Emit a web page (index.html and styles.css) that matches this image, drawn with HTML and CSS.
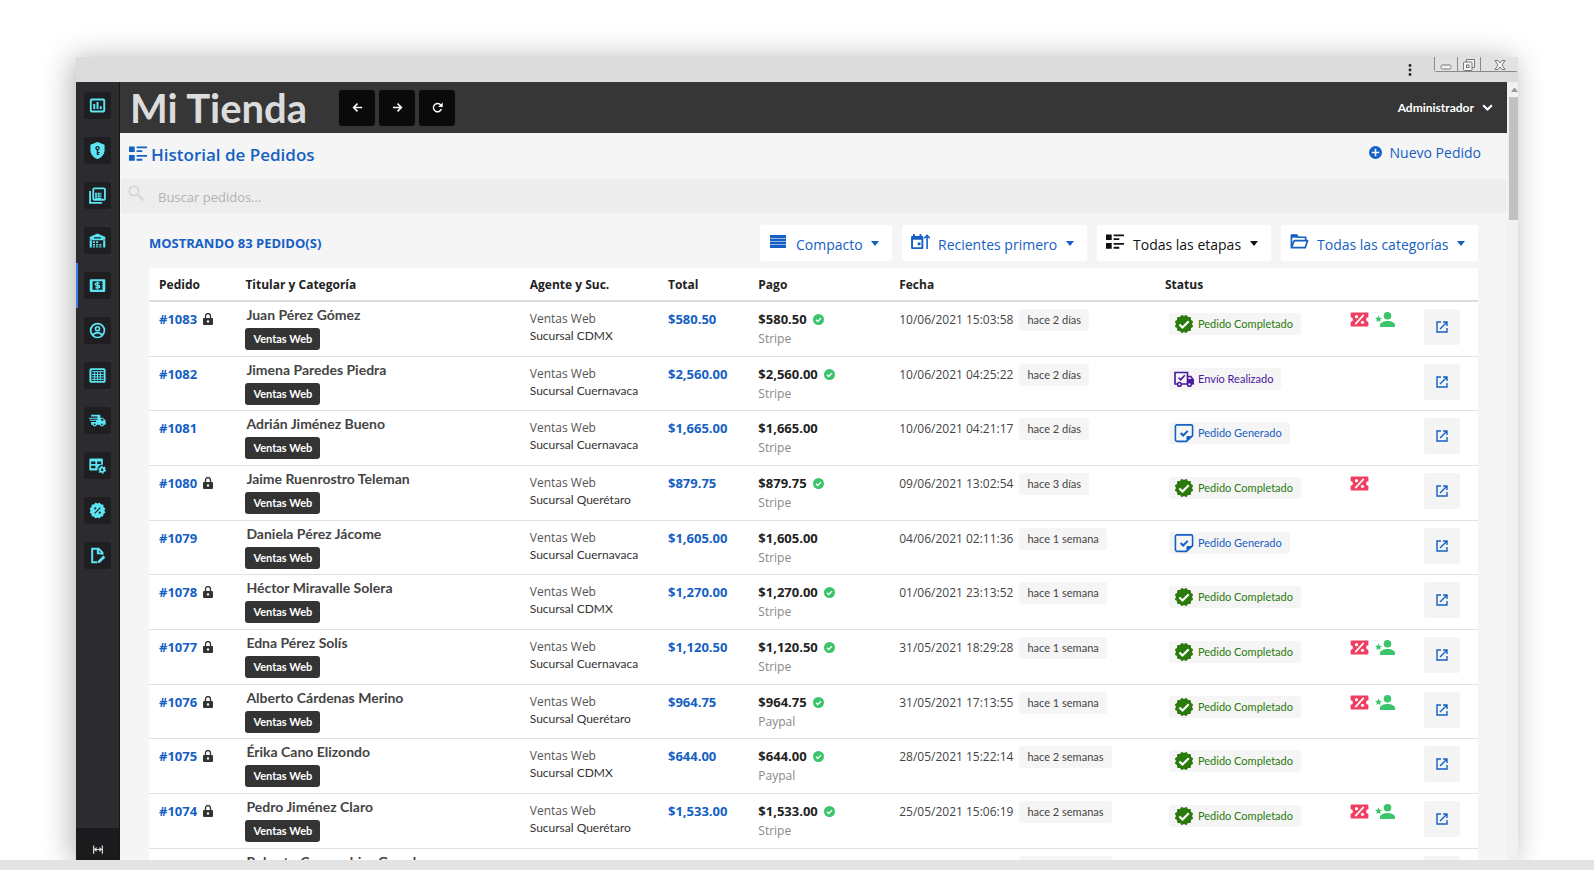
FILE: index.html
```html
<!DOCTYPE html>
<html lang="es">
<head>
    <meta charset="UTF-8">
    <meta name="viewport" content="width=device-width, initial-scale=1.0">
    <title>Mi Tienda - Historial de Pedidos</title>
    <link rel="stylesheet" href="styles.css">
</head>
<body>
    <!-- icon sprite -->
    <svg class="sprite" width="0" height="0" aria-hidden="true">
        <symbol id="i-chart" viewBox="0 0 24 24">
            <rect x="2.5" y="3.5" width="19" height="17" rx="1.5" fill="none" stroke="currentColor" stroke-width="2.6"/>
            <path d="M6 10h2.800v7H6zM10.600 7h2.800v10h-2.800zM15.200 13H18v4h-2.800z"/>
        </symbol>
        <symbol id="i-shield" viewBox="0 0 24 24">
            <path fill-rule="evenodd" d="M12 0 2 4v7.500C2 17 6.200 22 12 24c5.800-2 10-7 10-12.500V4zM12 5.500a3.200 3.200 0 0 1 1 6.200V14h2v1.500h-2V17h1.500v1.500H11v-6.800a3.200 3.200 0 0 1 1-6.200zm0 1.900a1.300 1.300 0 1 0 0 2.600 1.300 1.300 0 0 0 0-2.600z"/>
        </symbol>
        <symbol id="i-tables" viewBox="0 0 24 24">
            <path d="M1.500 5.500v17h17" fill="none" stroke="currentColor" stroke-width="2.600"/>
            <rect x="6" y="2" width="16.500" height="16" rx="1.500" fill="none" stroke="currentColor" stroke-width="2.600"/>
            <path d="M8.500 8h3v3h-3zM12.300 8h3v3h-3zM8.500 11.800h3v3h-3zM12.300 11.800h3v3h-3zM16 11.800h1.500v3H16zM8.500 15.500h9V18h-9zM16 8h1.500v3H16z"/>
        </symbol>
        <symbol id="i-store" viewBox="0 0 24 24">
            <path d="M12 2 1 7v4.500h22V7zM7 7.500h10V9H7zM1 11h3v11H1zM20 11h3v11h-3zM5.500 13h3v2.500h-3zM10 13h3v2.500h-3zM5.500 17h3v2h-3zM10 17h3v2h-3zM14.500 17h3v2h-3zM5.500 20.200h3V22h-3zM10 20.200h3V22h-3zM14.500 20.200h3V22h-3z"/>
        </symbol>
        <symbol id="i-cash" viewBox="0 0 24 24">
            <path fill-rule="evenodd" d="M2.500 3h19A1.500 1.500 0 0 1 23 4.500v15a1.500 1.500 0 0 1-1.500 1.500h-19A1.500 1.500 0 0 1 1 19.500v-15A1.500 1.500 0 0 1 2.500 3zM5 6v12h14V6z"/>
            <path d="M15 8.700h-4.500a1.600 1.600 0 0 0 0 3.200h3a1.600 1.600 0 0 1 0 3.200H9M12 6.500v11" fill="none" stroke="currentColor" stroke-width="2"/>
        </symbol>
        <symbol id="i-user" viewBox="0 0 24 24">
            <path d="M12 1a11 11 0 1 0 0 22 11 11 0 0 0 0-22zM6.800 18.600c.6-1.200 3.200-2.100 5.200-2.100s4.600.9 5.200 2.100a8.200 8.200 0 0 1-10.400 0zm12-2C17.100 14.500 13.500 14 12 14s-5.100.5-6.800 2.600A8.400 8.400 0 1 1 20.500 12c0 1.700-.6 3.300-1.700 4.600zM12 5.500a4 4 0 1 0 0 8 4 4 0 0 0 0-8zm0 2.300a1.700 1.700 0 1 1 0 3.400 1.700 1.700 0 0 1 0-3.400z"/>
        </symbol>
        <symbol id="i-grid" viewBox="0 0 24 24">
            <rect x="2" y="3" width="20" height="18" rx="1" fill="none" stroke="currentColor" stroke-width="2.800"/>
            <path d="M4 6.500h16M4 10.500h16M4 14h16M4 17.500h16M8 7v12M12 7v12M16 7v12" fill="none" stroke="currentColor" stroke-width="1.400"/>
        </symbol>
        <symbol id="i-truck" viewBox="0 0 24 24">
            <path d="M3 4h13v4h3.500L23.500 12v6h-2.200a3.200 3.200 0 0 1-6.200 0h-4a3.200 3.200 0 0 1-6.200 0H3v-4h7v-1.500H1V11h11V9.500H0V8h12V6.500H3zM17 9.700V12h4.300l-1.800-2.300z"/>
            <circle cx="8" cy="17.500" r="1.200" fill="#1f1f22"/><circle cx="18.200" cy="17.500" r="1.200" fill="#1f1f22"/>
        </symbol>
        <symbol id="i-tablecog" viewBox="0 0 24 24">
            <path fill-rule="evenodd" d="M2 2h16a1.500 1.500 0 0 1 1.500 1.500V11a6.500 6.500 0 0 0-7.500 8H2a1.500 1.500 0 0 1-1.500-1.500v-14A1.500 1.500 0 0 1 2 2zM3 6.500V10h6V6.500zm8.500 0V10H17V6.500zM3 12.500V16h6v-3.500z"/>
            <circle cx="18.500" cy="18" r="3" fill="none" stroke="currentColor" stroke-width="2.600"/>
            <circle cx="18.500" cy="18" r="4.700" fill="none" stroke="currentColor" stroke-width="1.800" stroke-dasharray="2.460"/>
        </symbol>
        <symbol id="i-sale" viewBox="0 0 24 24">
            <rect x="3.700" y="3.700" width="16.600" height="16.600" rx="1"/><rect x="3.700" y="3.700" width="16.600" height="16.600" rx="1" transform="rotate(30 12 12)"/><rect x="3.700" y="3.700" width="16.600" height="16.600" rx="1" transform="rotate(60 12 12)"/>
            <path d="m8 16 8-8" stroke="#1f1f22" stroke-width="1.800"/><circle cx="8.800" cy="9" r="1.500" fill="#1f1f22"/><circle cx="15.200" cy="15" r="1.500" fill="#1f1f22"/>
        </symbol>
        <symbol id="i-fileedit" viewBox="0 0 24 24">
            <path d="M12 21.500H4.500v-19h9l5.500 5.500v3M12.500 3v6H19" fill="none" stroke="currentColor" stroke-width="2.800"/>
            <path d="m12.500 22.500.3-3 7.500-7.500 2.700 2.700-7.500 7.500z"/>
        </symbol>
        <symbol id="i-expand" viewBox="0 0 24 24">
            <path d="M2.500 3v18M21.500 3v18M5 12h14M9 8l-4 4 4 4M15 8l4 4-4 4" fill="none" stroke="currentColor" stroke-width="2.600"/>
        </symbol>
        <symbol id="i-left" viewBox="0 0 24 24"><path d="M22 12H4M12 3.500 3.500 12l8.500 8.500" fill="none" stroke="currentColor" stroke-width="3.400"/></symbol>
        <symbol id="i-right" viewBox="0 0 24 24"><path d="M2 12h18M12 3.500l8.500 8.500-8.500 8.500" fill="none" stroke="currentColor" stroke-width="3.400"/></symbol>
        <symbol id="i-reload" viewBox="0 0 24 24"><path d="M20.500 15.500A9 9 0 1 1 18 5.500L21 8.500" fill="none" stroke="currentColor" stroke-width="3.200"/><path d="M23.500 1v10h-10z"/></symbol>
        <symbol id="i-chevron" viewBox="0 0 24 24"><path d="m2.500 7 9.500 9.500L21.500 7" fill="none" stroke="currentColor" stroke-width="4.500"/></symbol>
        <symbol id="i-list" viewBox="0 0 20 16"><path d="M0 0h6v6H0zM0 9h6v6H0zM8 0h11v2H8zM8 4h6v2H8zM8 9h11v2H8zM8 13h6v2H8z"/></symbol>
        <symbol id="i-search" viewBox="0 0 24 24"><circle cx="9" cy="9" r="7" fill="none" stroke="currentColor" stroke-width="2.600"/><path d="m14 14 9 9" stroke="currentColor" stroke-width="3.400"/></symbol>
        <symbol id="i-plus" viewBox="0 0 24 24"><path fill-rule="evenodd" d="M12 0a12 12 0 1 0 0 24 12 12 0 0 0 0-24zm1.500 5v5.500H19v3h-5.500V19h-3v-5.500H5v-3h5.500V5z"/></symbol>
        <symbol id="i-rows" viewBox="0 0 16 13"><path d="M0 0h16v13H0z" opacity=".45"/><path d="M0 0h16v3H0zM0 4h16v2H0zM0 7h16v2H0zM0 10h16v3H0z"/></symbol>
        <symbol id="i-calendar" viewBox="0 0 20 17">
            <path fill-rule="evenodd" d="M2 0h2v2h5V0h2v2h1a1 1 0 0 1 1 1v12a1 1 0 0 1-1 1H1a1 1 0 0 1-1-1V3a1 1 0 0 1 1-1h1zm0 6v8h9V6zM7 9h3v3H7z"/>
            <path d="M17 16V2M14 4.500l3-3 3 3" fill="none" stroke="currentColor" stroke-width="1.700"/>
        </symbol>
        <symbol id="i-folder" viewBox="0 0 20 16">
            <path d="M1.500 14V1h5.500l1.500 2h8v2.500M1.500 14 4.500 6.500h14L16 14z" fill="none" stroke="currentColor" stroke-width="1.800" stroke-linejoin="round"/><path d="M1 0h7v3.500H1z"/>
        </symbol>
        <symbol id="i-lock" viewBox="0 0 10 12"><path fill-rule="evenodd" d="M1 5h8a1 1 0 0 1 1 1v5a1 1 0 0 1-1 1H1a1 1 0 0 1-1-1V6a1 1 0 0 1 1-1zm4 2.200a1.200 1.200 0 1 0 0 2.400 1.200 1.200 0 0 0 0-2.400z"/><path d="M2.500 5.500V3a2.500 2.500 0 0 1 5 0v2.500" fill="none" stroke="currentColor" stroke-width="1.300"/></symbol>
        <symbol id="i-check" viewBox="0 0 24 24"><circle cx="12" cy="12" r="12"/><path d="m6.500 12.500 3.800 3.800 7.200-7.300" fill="none" stroke="#fff" stroke-width="2.800"/></symbol>
        <symbol id="i-done" viewBox="0 0 24 24">
            <rect x="3.700" y="3.700" width="16.600" height="16.600" rx="1.500"/><rect x="3.700" y="3.700" width="16.600" height="16.600" rx="1.500" transform="rotate(30 12 12)"/><rect x="3.700" y="3.700" width="16.600" height="16.600" rx="1.500" transform="rotate(60 12 12)"/>
            <path d="m6.500 12.500 3.700 3.700 7.500-7.500" fill="none" stroke="#fff" stroke-width="2.600"/>
        </symbol>
        <symbol id="i-sent" viewBox="0 0 24 24">
            <path d="M4 18H1.200V4.200h15V18H9M16.200 9h4l2.800 4v5h-1M13 18h2" fill="none" stroke="currentColor" stroke-width="2"/><path d="M16.500 12h6.500v6h-6.500z"/>
            <circle cx="6.500" cy="18.500" r="2.200" fill="#f5f5f5" stroke="currentColor" stroke-width="1.800"/><circle cx="18.500" cy="18.500" r="2.200" fill="#f5f5f5" stroke="currentColor" stroke-width="1.800"/>
            <path d="m5.500 10.500 2.500 2.500 5-5.500" fill="none" stroke="currentColor" stroke-width="2"/>
        </symbol>
        <symbol id="i-created" viewBox="0 0 24 24">
            <path d="M15 22H3.500A1.800 1.800 0 0 1 1.700 20V4A1.800 1.800 0 0 1 3.500 2.200h17A1.800 1.800 0 0 1 22.300 4v11z" fill="none" stroke="currentColor" stroke-width="1.900"/><path d="M15 22.500V17a1.500 1.500 0 0 1 1.500-1.500H23z"/>
            <path d="m8 12 3 3 5.500-5.500" fill="none" stroke="currentColor" stroke-width="2.400"/>
        </symbol>
        <symbol id="i-coupon" viewBox="0 0 20 16">
            <path d="M1.500.5h17A1 1 0 0 1 19.500 1.500V5.500a2.500 2.500 0 0 0 0 5v4a1 1 0 0 1-1 1h-17a1 1 0 0 1-1-1v-4a2.500 2.500 0 0 0 0-5v-4a1 1 0 0 1 1-1z"/>
            <path d="m5.500 13 9-10" stroke="#fff" stroke-width="1.800"/><circle cx="6.800" cy="5" r="1.700" fill="#fff"/><circle cx="13.200" cy="11" r="1.700" fill="#fff"/>
        </symbol>
        <symbol id="i-newuser" viewBox="0 0 20 15"><circle cx="12.500" cy="3.800" r="3.800"/><path d="M5 15v-2c0-2.500 4.500-4 7.500-4s7.500 1.500 7.500 4v2zM3.500 3.500l1 2.300 2.500.2-1.900 1.600.6 2.400-2.200-1.300L1.300 10l.6-2.400L0 6l2.500-.2z"/></symbol>
        <symbol id="i-open" viewBox="0 0 12 12"><path d="M5 1H1v10h10V7M7 1h4v4M11 1 4 8" fill="none" stroke="currentColor" stroke-width="1.400"/></symbol>
    </svg>

    <div class="window">
        <div class="titlebar">
            <svg class="dots" viewBox="0 0 4 12"><circle cx="2" cy="1.500" r="1.400"/><circle cx="2" cy="6" r="1.400"/><circle cx="2" cy="10.500" r="1.400"/></svg>
            <div class="controls">
                <button aria-label="Minimizar"><svg width="12" height="12" viewBox="0 0 12 12"><rect x="1" y="6" width="10" height="4" rx="1.500"/></svg></button>
                <button aria-label="Restaurar"><svg width="12" height="12" viewBox="0 0 12 12"><path d="M3.500 3V.5h8v8H9"/><rect x=".5" y="3" width="8.500" height="8.500" rx="1"/><rect x="3.500" y="6" width="2.500" height="2.500"/></svg></button>
                <button aria-label="Cerrar"><svg width="12" height="12" viewBox="0 0 12 12"><path d="M1 1.500h3L6 4l2-2.500h3L8 6l3 4.500H8L6 8l-2 2.500H1L4 6z"/></svg></button>
            </div>
        </div>
        <div class="app">
            <nav class="sidebar" id="sidebar"></nav>
            <div class="page">
                <header class="topbar">
                    <h1>Mi Tienda</h1>
                    <button class="navBtn" aria-label="Atrás"><svg><use href="#i-left"/></svg></button>
                    <button class="navBtn" aria-label="Adelante"><svg><use href="#i-right"/></svg></button>
                    <button class="navBtn" aria-label="Recargar"><svg><use href="#i-reload"/></svg></button>
                    <button class="account">Administrador <svg><use href="#i-chevron"/></svg></button>
                </header>
                <div class="heading">
                    <svg><use href="#i-list"/></svg>
                    <h2>Historial de Pedidos</h2>
                    <a href="#nuevo"><svg><use href="#i-plus"/></svg>Nuevo Pedido</a>
                </div>
                <label class="search">
                    <svg><use href="#i-search"/></svg>
                    <input type="text" placeholder="Buscar pedidos..." aria-label="Buscar pedidos">
                </label>
                <main>
                    <div class="toolbar">
                        <strong>MOSTRANDO 83 PEDIDO(S)</strong>
                        <label class="filter"><svg class="icoRows"><use href="#i-rows"/></svg><select aria-label="Vista"><option>Compacto</option></select></label>
                        <label class="filter"><svg><use href="#i-calendar"/></svg><select aria-label="Orden"><option>Recientes primero</option></select></label>
                        <label class="filter dark"><svg><use href="#i-list"/></svg><select aria-label="Etapa"><option>Todas las etapas</option></select></label>
                        <label class="filter"><svg><use href="#i-folder"/></svg><select aria-label="Categoría"><option>Todas las categorías</option></select></label>
                    </div>
                    <table>
                        <thead>
                            <tr>
                                <th class="colId">Pedido</th>
                                <th class="colName">Titular y Categoría</th>
                                <th class="colAgent">Agente y Suc.</th>
                                <th class="colTotal">Total</th>
                                <th class="colPay">Pago</th>
                                <th class="colDate">Fecha</th>
                                <th class="colStatus">Status</th>
                                <th class="colFlags"></th>
                                <th></th>
                            </tr>
                        </thead>
                        <tbody id="orders"></tbody>
                    </table>
                </main>
            </div>
            <div class="scrollbar"><i></i><div></div></div>
        </div>
    </div>
    <div class="bottomStrip"></div>

    <script>
        const menu = [
            ["chart", "Reportes"], ["shield", "Seguridad"], ["tables", "Catálogos"], ["store", "Sucursales"],
            ["cash", "Pedidos"], ["user", "Clientes"], ["grid", "Inventario"], ["truck", "Envíos"],
            ["tablecog", "Configuración"], ["sale", "Promociones"], ["fileedit", "Notas"]
        ];

        const states = {
            done: "Pedido Completado",
            sent: "Envío Realizado",
            created: "Pedido Generado"
        };

        //id, locked, name, branch, total, paid, method, date, age, status, coupon, new customer
        const orders = [
            [1083, 1, "Juan Pérez Gómez", "CDMX", "580.50", 1, "Stripe", "10/06/2021 15:03:58", "2 días", "done", 1, 1],
            [1082, 0, "Jimena Paredes Piedra", "Cuernavaca", "2,560.00", 1, "Stripe", "10/06/2021 04:25:22", "2 días", "sent", 0, 0],
            [1081, 0, "Adrián Jiménez Bueno", "Cuernavaca", "1,665.00", 0, "Stripe", "10/06/2021 04:21:17", "2 días", "created", 0, 0],
            [1080, 1, "Jaime Ruenrostro Teleman", "Querétaro", "879.75", 1, "Stripe", "09/06/2021 13:02:54", "3 días", "done", 1, 0],
            [1079, 0, "Daniela Pérez Jácome", "Cuernavaca", "1,605.00", 0, "Stripe", "04/06/2021 02:11:36", "1 semana", "created", 0, 0],
            [1078, 1, "Héctor Miravalle Solera", "CDMX", "1,270.00", 1, "Stripe", "01/06/2021 23:13:52", "1 semana", "done", 0, 0],
            [1077, 1, "Edna Pérez Solís", "Cuernavaca", "1,120.50", 1, "Stripe", "31/05/2021 18:29:28", "1 semana", "done", 1, 1],
            [1076, 1, "Alberto Cárdenas Merino", "Querétaro", "964.75", 1, "Paypal", "31/05/2021 17:13:55", "1 semana", "done", 1, 1],
            [1075, 1, "Érika Cano Elizondo", "CDMX", "644.00", 1, "Paypal", "28/05/2021 15:22:14", "2 semanas", "done", 0, 0],
            [1074, 1, "Pedro Jiménez Claro", "Querétaro", "1,533.00", 1, "Stripe", "25/05/2021 15:06:19", "2 semanas", "done", 1, 1],
            [1073, 1, "Roberto Covarrubias Grande", "Cuernavaca", "980.00", 1, "Stripe", "25/05/2021 12:40:05", "2 semanas", "done", 0, 0]
        ];

        function icon(name, cls){
            return `<svg class="${cls}"><use href="#i-${name}"/></svg>`;
        }

        document.getElementById("sidebar").innerHTML = menu.map(([name, label]) =>
            `<a href="#${name}" aria-label="${label}"${name === "cash" ? ' class="active"' : ""}><span>${icon(name, "menuIcon")}</span></a>`
        ).join("") + `<button aria-label="Expandir menú">${icon("expand", "expandIcon")}</button>`;

        document.getElementById("orders").innerHTML = orders.map(([id, locked, name, branch, total, paid, method, date, age, status, coupon, fresh]) => `
            <tr>
                <td><a class="orderId" href="#${id}">#${id}</a>${locked ? icon("lock", "lock") : ""}</td>
                <td class="holder"><p>${name}</p><span class="category">Ventas Web</span></td>
                <td class="agent"><p>Ventas Web</p><p class="branch">Sucursal ${branch}</p></td>
                <td class="total">$${total}</td>
                <td class="payment"><p><b>$${total}</b>${paid ? icon("check", "paid") : ""}</p><p class="method">${method}</p></td>
                <td class="date"><time>${date}</time><span class="age">hace ${age}</span></td>
                <td><span class="status ${status}">${icon(status, "statusIcon")}${states[status]}</span></td>
                <td class="flags">${coupon ? icon("coupon", "coupon") : ""}${fresh ? icon("newuser", "newuser") : ""}</td>
                <td class="action"><button aria-label="Abrir pedido ${id}">${icon("open", "openIcon")}</button></td>
            </tr>`).join("");
    </script>
</body>
</html>
```

FILE: styles.css
```css
*{
    box-sizing: border-box;
    margin: 0;
    padding: 0;
    font-family: "Open Sans", "Noto Sans", sans-serif;
}

body{
    height: 100vh;
    display: flex;
    flex-direction: column;
    overflow: hidden;
    background-color: #fff;
    color: #333;
    font-size: 12px;
}

button{
    border: none;
    cursor: pointer;
}

a{
    text-decoration: none;
}

svg{
    fill: currentColor;
    flex: none;
}

.sprite{
    position: absolute;
}

/* window frame */
.window{
    flex: 1;
    min-height: 0;
    margin: 57px 76px 0;
    display: flex;
    flex-direction: column;
    box-shadow: -4px 2px 28px rgba(0, 0, 0, 0.3);
}

.titlebar{
    height: 25px;
    flex: none;
    display: flex;
    justify-content: flex-end;
    align-items: flex-start;
    gap: 22px;
    background-color: #dcdcdc;
}

.dots{
    width: 4px;
    height: 12px;
    margin-top: 7px;
    color: #222;
}

.controls{
    display: flex;
    height: 15px;
    border: solid #8a8a8a 1px;
    border-width: 0 0 1px 1px;
    border-radius: 0 0 3px 3px;
}

.controls button{
    width: 23px;
    background-color: #e2e2e2;
    border-right: solid #8a8a8a 1px;
}

.controls button:last-child{
    width: 37px;
    border-right: none;
}

.controls svg{
    fill: #f4f4f4;
    stroke: #777;
    stroke-width: 1;
}

.app{
    flex: 1;
    min-height: 0;
    display: flex;
    background-color: #f5f5f5;
}

/* sidebar */
.sidebar{
    width: 44px;
    flex: none;
    display: flex;
    flex-direction: column;
    padding-top: 1px;
    background-color: #2b2b30;
    border-right: solid #151515 1px;
}

.sidebar a{
    height: 45px;
    display: flex;
    align-items: center;
    justify-content: center;
    color: #5ce5f5;
    border-left: solid transparent 2px;
    border-right: solid transparent 2px;
}

.sidebar a.active{
    border-left-color: #3f7fe8;
}

.sidebar span{
    width: 27px;
    height: 27px;
    display: flex;
    align-items: center;
    justify-content: center;
    background-color: #1f1f22;
    border-radius: 3px;
}

.menuIcon{
    width: 17px;
    height: 17px;
}

.sidebar button{
    height: 32px;
    margin-top: auto;
    padding-top: 12px;
    background-color: #1b1b1e;
    color: #ddd;
}

.expandIcon{
    width: 12px;
    height: 11px;
}

/* top bar */
.page{
    flex: 1;
    min-width: 0;
    overflow: hidden;
}

.topbar{
    height: 51px;
    display: flex;
    align-items: center;
    gap: 4px;
    padding: 0 14px 0 10px;
    background-color: #363636;
}

.topbar h1{
    margin-right: 28px;
    font-family: "Lato", "Open Sans", sans-serif;
    font-size: 40px;
    font-weight: 700;
    line-height: 50px;
    color: #dcdcdc;
}

.navBtn{
    width: 36px;
    height: 36px;
    background-color: #0a0a0a;
    color: #fff;
    border-radius: 3px;
}

.navBtn svg{
    width: 11px;
    height: 11px;
}

.account{
    display: flex;
    align-items: center;
    gap: 8px;
    margin-left: auto;
    background-color: transparent;
    color: #fff;
    font-family: "Lato", "Open Sans", sans-serif;
    font-size: 12px;
    font-weight: 700;
}

.account svg{
    width: 11px;
    height: 11px;
}

.heading{
    height: 46px;
    display: flex;
    align-items: center;
    gap: 3px;
    padding: 0 26px 4px 9px;
    color: #1560c4;
}

.heading > svg{
    width: 19px;
    height: 16px;
}

.heading h2{
    font-size: 17px;
    font-weight: 600;
}

.heading a{
    display: flex;
    align-items: center;
    gap: 8px;
    margin: 0 0 3px auto;
    color: #1560c4;
    font-size: 14px;
}

.heading a svg{
    width: 13px;
    height: 13px;
}

.search{
    height: 34px;
    display: flex;
    align-items: center;
    gap: 14px;
    margin: 0 1px;
    padding: 0 7px;
    background-color: #ededed;
    border-radius: 3px;
    color: #d5d5d5;
}

.search svg{
    width: 16px;
    height: 16px;
    margin-bottom: 6px;
}

.search input{
    flex: 1;
    padding-top: 1px;
    background-color: transparent;
    border: none;
    font-size: 13px;
}

.search input::placeholder{
    color: #b2b2b2;
}

main{
    padding: 12px 29px 0;
}

.toolbar{
    display: flex;
    align-items: center;
    gap: 10px;
    margin-bottom: 7px;
}

.toolbar strong{
    margin-right: auto;
    color: #1560c4;
    font-size: 13px;
}

.filter{
    height: 36px;
    display: flex;
    align-items: center;
    gap: 8px;
    padding: 0 13px 0 9px;
    background-color: #fff;
    border-radius: 3px;
    color: #1560c4;
}

.filter.dark{
    color: #111;
}

.filter svg{
    width: 19px;
    height: 16px;
    margin-bottom: 3px;
}

.filter .icoRows{
    width: 18px;
    height: 13px;
    margin-right: 1px;
}

.filter::after{
    content: "";
    border: solid transparent 4px;
    border-top: solid currentColor 5px;
    border-bottom: none;
}

.filter select{
    appearance: none;
    height: 30px;
    padding-top: 2px;
    background-color: transparent;
    border: none;
    color: inherit;
    font-size: 14px;
}

/* orders table */
table{
    width: 100%;
    table-layout: fixed;
    border-collapse: separate;
    border-spacing: 0;
    background-color: #fff;
}

th{
    height: 34px;
    padding: 0 10px;
    text-align: left;
    color: #222;
    font-size: 12px;
    border-bottom: solid #dedede 2px;
}

.colId{ width: 6.5%; }
.colName{ width: 21.4%; }
.colAgent{ width: 10.4%; }
.colTotal{ width: 6.8%; }
.colPay{ width: 10.6%; }
.colDate{ width: 20%; }
.colStatus{ width: 13.9%; }
.colFlags{ width: 5.6%; }

tbody tr{
    height: 55px;
}

tbody tr:nth-child(3n+2){
    height: 54px;
}

td{
    padding: 8px 10px 0;
    vertical-align: top;
    line-height: 18px;
    white-space: nowrap;
    border-bottom: solid #e0e0e0 1px;
}

.orderId, .total{
    color: #1560c4;
    font-size: 13px;
    font-weight: 700;
}

.lock{
    width: 10px;
    height: 12px;
    margin-left: 6px;
    vertical-align: -1px;
}

.holder{
    padding-top: 3px;
}

.holder p{
    margin-bottom: 3px;
    padding-left: 1px;
    color: #444;
    font-family: "Lato", "Open Sans", sans-serif;
    font-size: 14px;
    font-weight: 700;
    line-height: 20px;
}

.category{
    display: block;
    width: 75px;
    background-color: #343434;
    color: #fff;
    border-radius: 3px;
    font-family: "Lato", "Open Sans", sans-serif;
    font-size: 11px;
    font-weight: 700;
    line-height: 22px;
    text-align: center;
}

.agent{
    color: #555;
}

.branch{
    color: #333;
    font-family: "Lato", "Open Sans", sans-serif;
    line-height: 16px;
}

.payment b{
    color: #222;
    font-size: 13px;
}

.paid{
    width: 11px;
    height: 11px;
    margin-left: 6px;
    color: #3cc46c;
    vertical-align: -1px;
}

.method{
    color: #888;
    line-height: 20px;
}

.date{
    padding-top: 7px;
    color: #444;
}

.age{
    display: inline-block;
    margin-left: 6px;
    padding: 0 8px;
    background-color: #f5f5f5;
    border-radius: 3px;
    font-family: "Lato", "Open Sans", sans-serif;
    font-size: 11px;
    line-height: 22px;
}

.status{
    display: inline-flex;
    align-items: center;
    gap: 4px;
    height: 22px;
    margin: 3px 0 0 4px;
    padding: 0 8px 0 5px;
    background-color: #f5f5f5;
    border-radius: 3px;
    font-family: "Lato", "Open Sans", sans-serif;
    font-size: 11px;
}

.statusIcon{
    width: 20px;
    height: 20px;
}

.done{
    color: #2a7a0c;
}

.sent{
    color: #4a1aa0;
}

.created{
    color: #1560c4;
}

.flags{
    padding-top: 10px;
}

.coupon{
    width: 19px;
    height: 15px;
    color: #f03e60;
}

.newuser{
    width: 20px;
    height: 15px;
    margin-left: 6px;
    color: #3cc46c;
}

.action{
    padding-top: 7px;
}

.action button{
    width: 36px;
    height: 36px;
    display: flex;
    align-items: center;
    justify-content: center;
    background-color: #f4f4f4;
    color: #1560c4;
    border-radius: 3px;
}

.openIcon{
    width: 12px;
    height: 12px;
}

/* scrollbar */
.scrollbar{
    width: 11px;
    flex: none;
    padding-left: 2px;
    background-color: #f1f1f1;
}

.scrollbar i{
    display: block;
    width: 7px;
    margin: 6px 0 5px 2px;
    border: solid transparent 3px;
    border-top: none;
    border-bottom: solid #999 4px;
}

.scrollbar div{
    height: 123px;
    background-color: #c1c1c1;
}

.bottomStrip{
    position: relative;
    height: 10px;
    flex: none;
    background-color: #e3e3e3;
}
```
